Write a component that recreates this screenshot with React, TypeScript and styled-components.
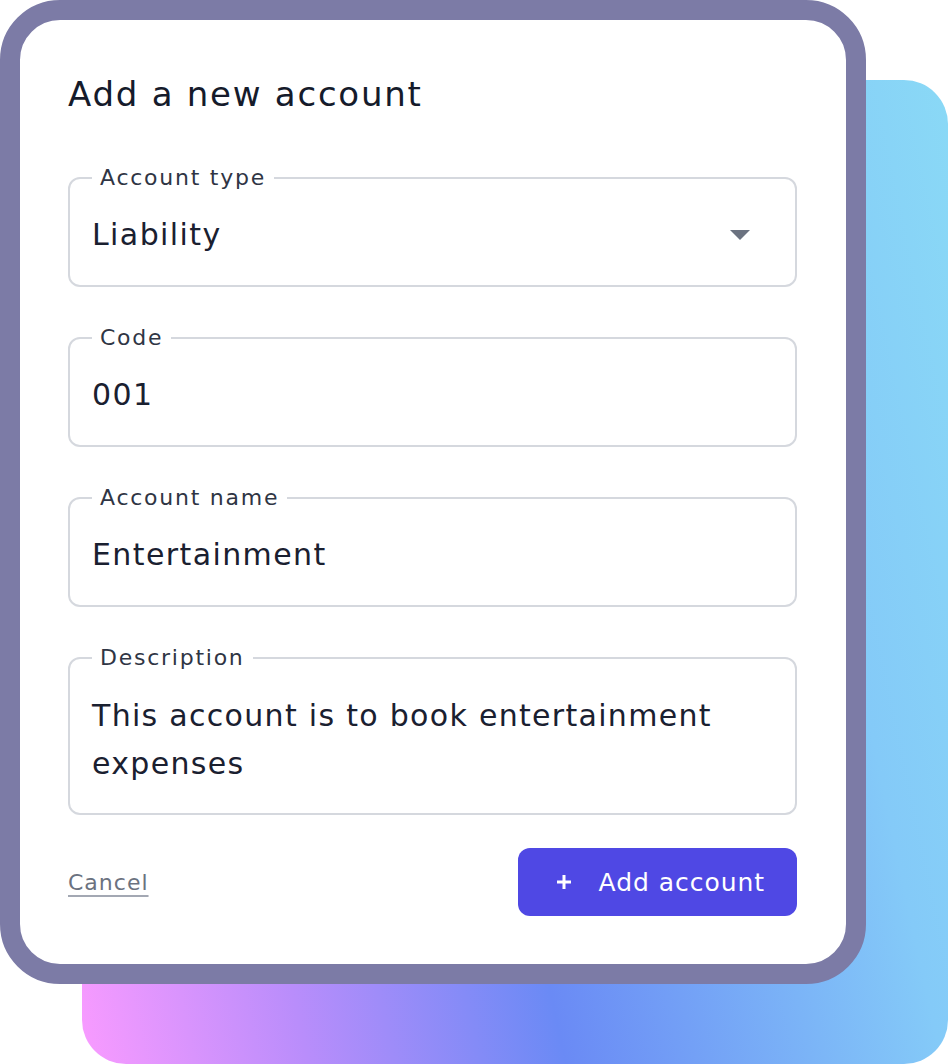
import React from 'react';
import styled, { createGlobalStyle } from 'styled-components';

const GlobalStyle = createGlobalStyle`
  body {
    margin: 0;
    background: #ffffff;
    font-family: 'DejaVu Sans', 'Noto Sans', sans-serif;
  }
`;

type FieldProps = {
  label: string;
  tall?: boolean;
  children: React.ReactNode;
};

const Field = ({ label, tall, children }: FieldProps) => (
  <FieldSet $tall={tall}>
    <Legend>{label}</Legend>
    {children}
  </FieldSet>
);

const App = () => {
  return (
    <>
      <GlobalStyle />
      <Stage>
        <Backdrop />
        <Card>
          <Title>Add a new account</Title>
          <Form>
            <Field label="Account type">
              <ValueRow>
                <Value>Liability</Value>
                <Caret viewBox="0 0 20 10" aria-hidden="true">
                  <path d="M0 0 L20 0 L10 10 Z" fill="#6b7280" />
                </Caret>
              </ValueRow>
            </Field>
            <Field label="Code">
              <Value>001</Value>
            </Field>
            <Field label="Account name">
              <Value>Entertainment</Value>
            </Field>
            <Field label="Description" tall>
              <LongText>This account is to book entertainment expenses</LongText>
            </Field>
          </Form>
          <Footer>
            <CancelLink href="#">Cancel</CancelLink>
            <AddButton type="button">
              <PlusIcon viewBox="0 0 16 16" aria-hidden="true">
                <path d="M8 1 V15 M1 8 H15" stroke="#ffffff" strokeWidth="3" />
              </PlusIcon>
              <span>Add account</span>
            </AddButton>
          </Footer>
        </Card>
      </Stage>
    </>
  );
};

const Stage = styled.div`
  display: grid;
  width: 948px;
  height: 1064px;
  overflow: hidden;
`;

const Backdrop = styled.div`
  grid-area: 1 / 1;
  margin: 80px 0 0 82px;
  width: 866px;
  height: 984px;
  border-radius: 44px;
  background: linear-gradient(
    78deg,
    #f99bff 0%,
    #b98dfb 21%,
    #6a8af5 45%,
    #84caf8 80%,
    #8ad9f6 100%
  );
`;

const Card = styled.div`
  grid-area: 1 / 1;
  position: relative;
  box-sizing: border-box;
  width: 866px;
  height: 984px;
  border: 20px solid #7c7ba6;
  border-radius: 60px;
  background: #ffffff;
  padding: 54px 49px 0 48px;
  display: flex;
  flex-direction: column;
`;

const Title = styled.h1`
  margin: 0;
  font-size: 34px;
  line-height: 40px;
  font-weight: 400;
  letter-spacing: 1.75px;
  color: #151b2b;
`;

const Form = styled.div`
  display: flex;
  flex-direction: column;
  gap: 39px;
  margin-top: 52px;
`;

const FieldSet = styled.fieldset<{ $tall?: boolean }>`
  margin: 0;
  min-width: 0;
  border: 2px solid #d5d8de;
  border-radius: 12px;
  padding: ${(p) => (p.$tall ? '22px 22px 25px' : '27px 22px 32px')};
`;

const Legend = styled.legend`
  padding: 0 8px;
  font-size: 22px;
  line-height: 24px;
  letter-spacing: 1.75px;
  color: #2f3544;
`;

const ValueRow = styled.div`
  display: flex;
  align-items: center;
  justify-content: space-between;
`;

const Value = styled.div`
  font-size: 30px;
  line-height: 36px;
  letter-spacing: 1.4px;
  color: #1a2030;
`;

const Caret = styled.svg`
  width: 20px;
  height: 10px;
  margin-right: 23px;
`;

const LongText = styled.div`
  font-size: 30px;
  line-height: 48px;
  letter-spacing: 1.3px;
  color: #1a2030;
`;

const Footer = styled.div`
  display: flex;
  align-items: center;
  justify-content: space-between;
  margin-top: 33px;
`;

const CancelLink = styled.a`
  font-size: 22px;
  letter-spacing: 1px;
  color: #6b7280;
  text-decoration: underline;
  text-decoration-color: #a3a8b3;
  text-decoration-thickness: 2px;
  text-underline-offset: 5px;
`;

const AddButton = styled.button`
  display: flex;
  align-items: center;
  gap: 27px;
  box-sizing: border-box;
  height: 68px;
  padding: 0 32px 0 38px;
  border: none;
  border-radius: 12px;
  background: #4f48e4;
  color: #ffffff;
  font-family: 'DejaVu Sans', 'Noto Sans', sans-serif;
  font-size: 25px;
  letter-spacing: 0.95px;
  white-space: nowrap;
  cursor: pointer;
`;

const PlusIcon = styled.svg`
  flex: none;
  width: 16px;
  height: 16px;
`;

export default App;
